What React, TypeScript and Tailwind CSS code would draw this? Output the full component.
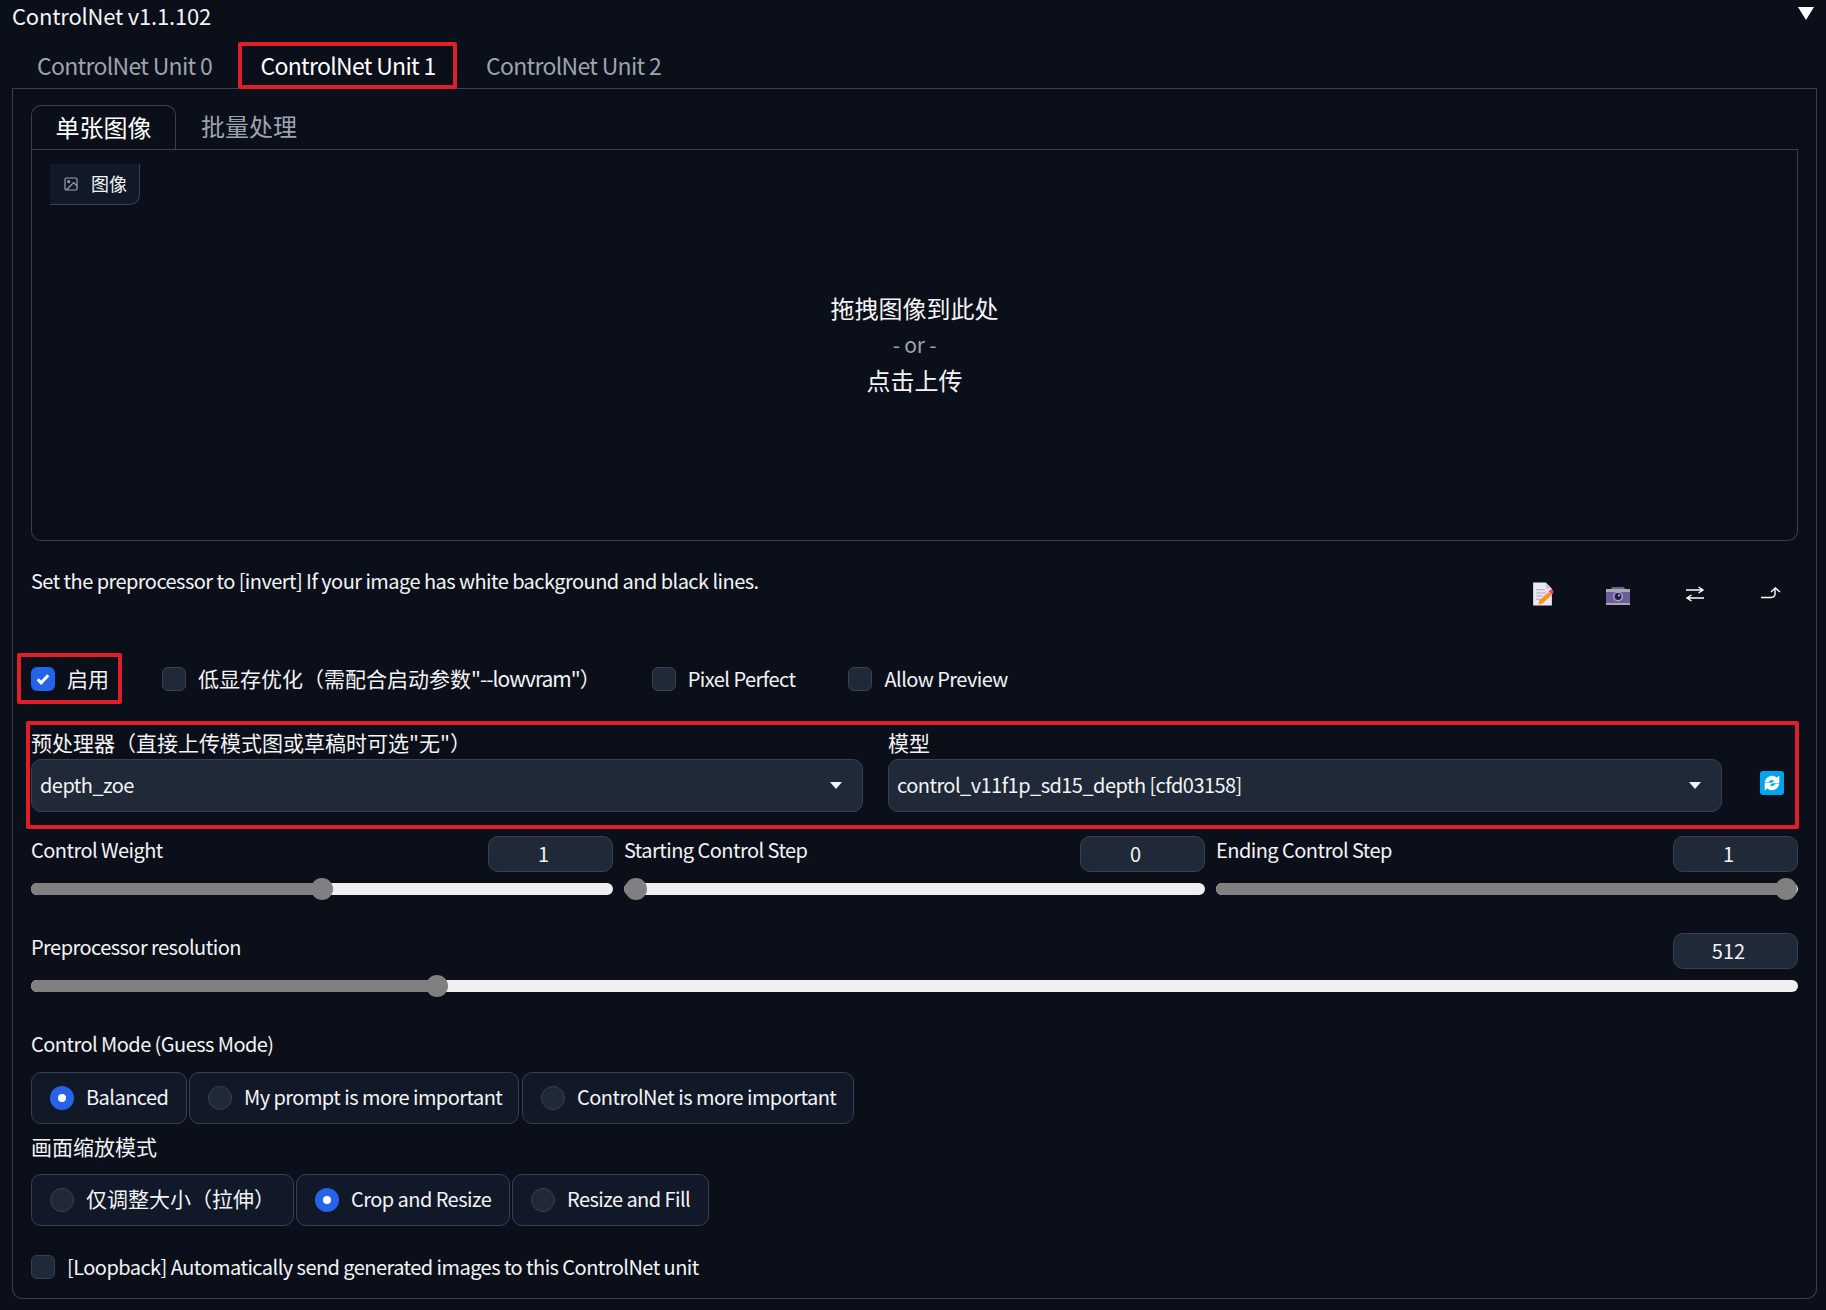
const font = "font-['Noto_Sans_CJK_SC','Noto_Sans',sans-serif]";
// the latin runs in the reference are tighter than the font's own advances
const latin = "text-[20px] tracking-[-0.55px]";
const cjk = "text-[21px]";

function Slider({ label, value, pct, className }: { label: string; value: string; pct: number; className?: string }) {
  return (
    <div className={className}>
      <div className="flex justify-between items-start h-[36px]">
        <span className={`${latin} leading-[28px]`}>{label}</span>
        <div className="w-[125px] h-[36px] rounded-[10px] border border-[#374151] bg-[#1f2937] pr-[14px] text-center text-[20px] leading-[34px]">{value}</div>
      </div>
      <div className="relative mt-[6px] h-[22px] flex items-center">
        <div className="w-full h-[12px] rounded-full bg-[#efefef] overflow-hidden">
          <div className="h-full bg-[#808080]" style={{ width: `${pct}%` }} />
        </div>
        <div className="absolute top-0 w-[22px] h-[22px] -ml-[11px] rounded-full bg-[#808080]" style={{ left: `${pct}%` }} />
      </div>
    </div>
  );
}

function Check({ checked }: { checked?: boolean }) {
  return checked ? (
    <div className="w-[24px] h-[24px] rounded-[6px] bg-[#2563eb] flex items-center justify-center shrink-0">
      <svg viewBox="0 0 24 24" className="w-[18px] h-[18px]" fill="none" stroke="white" strokeWidth="4"><path d="M5 12.5l4.5 4.5L19 7" /></svg>
    </div>
  ) : (
    <div className="w-[24px] h-[24px] rounded-[6px] border border-[#374151] bg-[#1f2937] shrink-0" />
  );
}

function Radio({ label, checked, className, zh }: { label: string; checked?: boolean; className: string; zh?: boolean }) {
  return (
    <div className={`h-[52px] flex items-center pl-[18px] rounded-[10px] border border-[#374151] bg-[#111827] ${className}`}>
      {checked ? (
        <div className="w-[24px] h-[24px] rounded-full bg-[#2563eb] flex items-center justify-center shrink-0"><div className="w-[8px] h-[8px] rounded-full bg-white" /></div>
      ) : (
        <div className="w-[24px] h-[24px] rounded-full border border-[#374151] bg-[#1f2937] shrink-0" />
      )}
      <span className={`ml-[12px] pb-[2px] whitespace-nowrap ${zh ? cjk : latin}`}>{label}</span>
    </div>
  );
}

function Select({ value, className }: { value: string; className: string }) {
  return (
    <div className={`h-[53px] flex items-center justify-between rounded-[10px] border border-[#374151] bg-[#1f2937] pl-[8px] pr-[20px] ${latin} ${className}`}>
      <span className="pb-[2px]">{value}</span>
      <div className="w-0 h-0 border-l-[6px] border-r-[6px] border-t-[7px] border-l-transparent border-r-transparent border-t-[#f3f4f6]" />
    </div>
  );
}

function DocIcon() {
  return (
    <svg viewBox="0 0 24 24" className="w-[25px] h-[26px]">
      <path d="M3 1h12l6 6v16H3z" fill="#ece7f3" />
      <path d="M15 1l6 6h-6z" fill="#cfc8dc" />
      <path d="M6 8h8M6 11h9M6 14h6M6 17h4" stroke="#a9a3bb" strokeWidth="1" />
      <path d="M8 22l1-4 9-8 3 3-9 8z" fill="#f7931e" />
      <path d="M19 8.5a1.8 1.8 0 0 1 3 3l-1 1-3-3z" fill="#e83e8c" />
    </svg>
  );
}

function CamIcon() {
  return (
    <svg viewBox="0 0 26 20" className="w-[26px] h-[20px] mt-[4px]">
      <path d="M1 3h5l1-2h12l1 2h5v16H1z" fill="#6a5f98" />
      <path d="M1 3h24v3H1zM1 17h24v2H1z" fill="#a8a6ae" />
      <circle cx="13" cy="10.5" r="5" fill="#a89fc4" />
      <circle cx="13" cy="10.5" r="3.4" fill="#231c3f" />
      <circle cx="14" cy="9.5" r="1" fill="#d5cfe8" />
    </svg>
  );
}

function SwapIcon() {
  return (
    <svg viewBox="0 0 20 16" className="w-[20px] h-[16px] ml-[2px]" fill="none" stroke="white" strokeWidth="1.4">
      <path d="M1 4h17M13.5 1l4.5 3-4.5 3" />
      <path d="M2 12h17M6.5 9L2 12l4.500 3" />
    </svg>
  );
}

function SendIcon() {
  return (
    <svg viewBox="0 0 21 12" className="w-[21px] h-[12px] ml-[3px] -mt-[2px]" fill="none" stroke="white" strokeWidth="1.4">
      <path d="M0 10.5h10q3.5 0 4-3V2" />
      <path d="M10 5l4.3-4L19 5" />
    </svg>
  );
}

function RefreshIcon() {
  return (
    <svg viewBox="0 0 24 24" className="w-[24px] h-[24px]">
      <rect width="24" height="24" rx="3" fill="#03a4ed" />
      <path d="M5 11a7.200 7.200 0 0 1 12-4l2-2v7h-7l2.500-2.500a4 4 0 0 0-6 1.500z" fill="white" stroke="white" strokeWidth="0.6" />
      <path d="M19 13a7.200 7.200 0 0 1-12 4l-2 2v-7h7l-2.500 2.500a4 4 0 0 0 6-1.500z" fill="white" stroke="white" strokeWidth="0.6" />
    </svg>
  );
}

export default function App() {
  return (
    <div className={`${font} w-[1826px] h-[1310px] overflow-hidden bg-[#0b0f19] text-[#f3f4f6]`}>
      <div className="flex justify-between px-[12px] h-[30px] -mb-[2px] items-center text-[22px] tracking-[-0.2px]">
        <div className="leading-[30px]">ControlNet v1.1.102</div>
        <div className="w-0 h-0 -mt-[3px] border-l-[8px] border-r-[8px] border-t-[13px] border-l-transparent border-r-transparent border-t-white" />
      </div>

      {/* outer tabs */}
      <div className="flex ml-[12px] mr-[9px] h-[61px] items-end border-b border-[#374151] text-[23px] tracking-[-0.7px]">
        <div className="ml-[25px] w-[201px] h-[46px] leading-[46px] text-[#9ca3af]">ControlNet Unit 0</div>
        <div className="w-[219px] h-[47px] -mb-px border-[4px] border-[#e01e2b] rounded-[2px] pl-[1px] leading-[38px] text-center text-white">ControlNet Unit 1</div>
        <div className="ml-[29px] h-[46px] leading-[46px] text-[#9ca3af]">ControlNet Unit 2</div>
      </div>

      <div className="ml-[12px] mr-[9px] h-[1210px] rounded-b-[10px] border-x border-b border-[#374151] px-[18px] pt-[16px]">
        {/* inner tabs */}
        <div className="flex h-[45px] border-b border-[#374151]">
          <div className="w-[145px] h-[45px] rounded-t-[10px] border-x border-t border-[#374151] text-center text-[24px] leading-[41px] text-white">单张图像</div>
          <div className="ml-[25px] text-[24px] leading-[41px] text-[#9ca3af]">批量处理</div>
        </div>

        {/* drop zone */}
        <div className="relative h-[391px] rounded-b-[10px] border-x border-b border-[#374151]">
          <div className="absolute left-[18px] top-[14px] w-[90px] h-[41px] rounded-br-[10px] border-r border-b border-[#374151] bg-[#111827] flex items-center pl-[13px] gap-[12px] text-[18px]">
            <svg viewBox="0 0 24 24" className="w-[16px] h-[16px]" fill="none" stroke="#9ca3af" strokeWidth="1.8"><rect x="3" y="3" width="18" height="18" rx="2" /><circle cx="8.5" cy="8.5" r="1.5" /><path d="M21 15l-5-5L5 21" /></svg>
            <span className="pb-[2px]">图像</span>
          </div>
          <div className="h-full flex flex-col items-center pt-[140px] text-[24px]">
            <div className="h-[36px] leading-[36px]">拖拽图像到此处</div>
            <div className="h-[36px] leading-[36px] text-[21px] tracking-[-0.2px] text-[#9ca3af]">- or -</div>
            <div className="h-[36px] leading-[36px]">点击上传</div>
          </div>
        </div>

        {/* note + tool icons */}
        <div className="flex justify-between h-[112px]">
          <div className={`mt-[25px] ${latin} leading-[30px] whitespace-nowrap`}>Set the preprocessor to [invert] If your image has white background and black lines.</div>
          <div className="flex mt-[39px] -mr-[10px] h-[28px] items-center">
            <div className="w-[76px] flex justify-center"><DocIcon /></div>
            <div className="w-[76px] flex justify-center"><CamIcon /></div>
            <div className="w-[76px] flex justify-center"><SwapIcon /></div>
            <div className="w-[76px] flex justify-center"><SendIcon /></div>
          </div>
        </div>

        {/* checkboxes */}
        <div className="flex items-center h-[51px] whitespace-nowrap">
          <div className="-ml-[14px] w-[105px] h-[51px] border-[4px] border-[#e01e2b] flex items-center pl-[10px] gap-[12px] rounded-[2px]">
            <Check checked />
            <span className={cjk}>启用</span>
          </div>
          <div className="ml-[40px] flex items-center gap-[12px]"><Check /><span className={cjk}>低显存优化（需配合启动参数<span className="tracking-[-1px]">"--lowvram"</span>）</span></div>
          <div className="ml-[51px] flex items-center gap-[12px]"><Check /><span className={latin}>Pixel Perfect</span></div>
          <div className="ml-[53px] flex items-center gap-[12px]"><Check /><span className={latin}>Allow Preview</span></div>
        </div>

        {/* preprocessor / model */}
        <div className="mt-[17px] -ml-[5px] w-[1773px] h-[108px] border-[4px] border-[#e01e2b] rounded-[2px] pl-[1px]">
          <div className={`flex h-[34px] ${cjk} leading-[34px]`}>
            <span className="w-[857px]">预处理器（直接上传模式图或草稿时可选"无"）</span>
            <span>模型</span>
          </div>
          <div className="flex items-center">
            <Select value="depth_zoe" className="w-[832px]" />
            <Select value="control_v11f1p_sd15_depth [cfd03158]" className="ml-[25px] w-[834px]" />
            <div className="ml-[38px] -mt-[5px]"><RefreshIcon /></div>
          </div>
        </div>

        {/* sliders */}
        <div className="mt-[7px] flex gap-[11px]">
          <Slider className="w-[582px]" label="Control Weight" value="1" pct={50} />
          <Slider className="w-[581px]" label="Starting Control Step" value="0" pct={2} />
          <Slider className="w-[582px]" label="Ending Control Step" value="1" pct={98} />
        </div>
        <Slider className="mt-[33px] w-[1767px]" label="Preprocessor resolution" value="512" pct={23} />

        {/* radios */}
        <div className={`mt-[32px] ${latin} leading-[30px]`}>Control Mode (Guess Mode)</div>
        <div className="mt-[13px] flex gap-[3px]">
          <Radio label="Balanced" checked className="w-[156px]" />
          <Radio label="My prompt is more important" className="w-[330px] -ml-[1px]" />
          <Radio label="ControlNet is more important" className="w-[332px]" />
        </div>
        <div className={`mt-[7px] ${cjk} leading-[30px]`}>画面缩放模式</div>
        <div className="mt-[13px] flex gap-[3px]">
          <Radio label="仅调整大小（拉伸）" zh className="w-[263px]" />
          <Radio label="Crop and Resize" checked className="w-[214px] -ml-[1px]" />
          <Radio label="Resize and Fill" className="w-[197px] -ml-[1px]" />
        </div>

        <div className="mt-[26px] flex items-center gap-[12px]">
          <Check />
          <span className={latin}>[Loopback] Automatically send generated images to this ControlNet unit</span>
        </div>
      </div>
    </div>
  );
}
